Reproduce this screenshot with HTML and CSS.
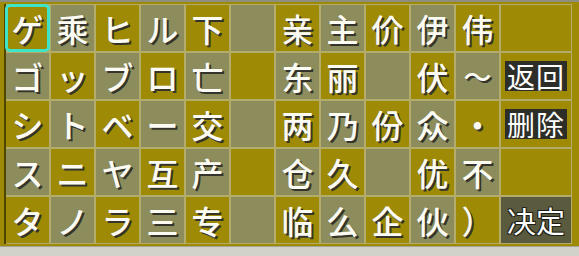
FILE: index.html
```html
<!DOCTYPE html>
<html lang="ja">
<head>
<meta charset="utf-8">
<title>文字入力</title>
<link rel="stylesheet" href="styles.css">
</head>
<body>
<div class="screen">
  <div class="frame">
    <div class="grid">
      <div class="cell g sel">ゲ</div><div class="cell m">乘</div><div class="cell g">ヒ</div><div class="cell m">ル</div><div class="cell g">下</div><div class="cell m"></div>
      <div class="cell g">亲</div><div class="cell m">主</div><div class="cell g">价</div><div class="cell m">伊</div><div class="cell g">伟</div><div class="cell g"></div>

      <div class="cell m">ゴ</div><div class="cell g">ッ</div><div class="cell m">ブ</div><div class="cell g">ロ</div><div class="cell m">亡</div><div class="cell g"></div>
      <div class="cell m">东</div><div class="cell g">丽</div><div class="cell m"></div><div class="cell g">伏</div><div class="cell m small">〜</div><div class="cell g"><span class="btn">返回</span></div>

      <div class="cell g">シ</div><div class="cell m">ト</div><div class="cell g">ベ</div><div class="cell m">ー</div><div class="cell g">交</div><div class="cell m"></div>
      <div class="cell g">两</div><div class="cell m">乃</div><div class="cell g">份</div><div class="cell m">众</div><div class="cell g">・</div><div class="cell g"><span class="btn">删除</span></div>

      <div class="cell m">ス</div><div class="cell g">ニ</div><div class="cell m">ヤ</div><div class="cell g">互</div><div class="cell m">产</div><div class="cell g"></div>
      <div class="cell m">仓</div><div class="cell g">久</div><div class="cell m"></div><div class="cell g">优</div><div class="cell m">不</div><div class="cell g"></div>

      <div class="cell g">タ</div><div class="cell m">ノ</div><div class="cell g">ラ</div><div class="cell m">三</div><div class="cell g">专</div><div class="cell m"></div>
      <div class="cell g">临</div><div class="cell m">么</div><div class="cell g">企</div><div class="cell m">伙</div><div class="cell g">）</div><div class="cell d"><span class="ok">决定</span></div>
    </div>
  </div>
</div>
</body>
</html>
```
FILE: styles.css
```css
html, body {
  margin: 0;
  padding: 0;
  background: #d2d2ca;
}

.screen {
  width: 579px;
  height: 247px;
  box-sizing: border-box;
  background: #9e8a04;
  border-top: 2px solid #8e8e7e;
  border-bottom: 1px solid #a4a494;
  padding: 2px 0 0 4px;
}

.frame {
  border-left: 2px solid #4e4600;
  height: 240px;
}

.grid {
  display: grid;
  grid-template-columns: repeat(11, 43px) 70px;
  grid-template-rows: repeat(5, 46px);
  gap: 2px;
  width: max-content;
  background: #b4ac6a;
  padding: 1px 1px 1px 0;
}

.cell {
  display: flex;
  align-items: center;
  justify-content: center;
  font-family: "Noto Sans CJK JP", "Noto Sans CJK SC", sans-serif;
  font-size: 32px;
  font-weight: 500;
  line-height: 1;
  color: #fbfbf4;
  text-shadow: 2px 2px 0 #34342a;
}

.small { font-size: 28px; }

.g { background: #9e8a04; }
.m { background: #8c8c5c; }
.d { background: #5a5a3e; }

.sel {
  outline: 3px solid #3ee4c8;
  outline-offset: -2px;
  border-radius: 4px;
}

.btn {
  background: #2e2e28;
  color: #ffffff;
  font-size: 28px;
  font-weight: 400;
  line-height: 30px;
  padding: 0 2px;
  text-shadow: none;
  letter-spacing: 1px;
}

.ok {
  font-size: 29px;
  font-weight: 400;
  color: #ffffff;
  text-shadow: 1px 1px 0 #1e1e18, -1px -1px 0 #1e1e18, 1px -1px 0 #1e1e18, -1px 1px 0 #1e1e18;
}
```
